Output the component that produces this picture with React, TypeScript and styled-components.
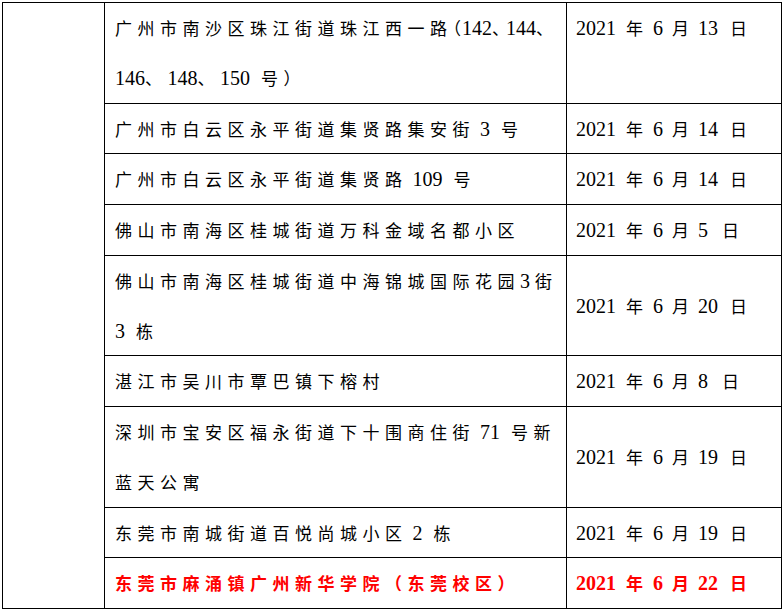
import styled, { createGlobalStyle, css } from "styled-components"

const GlobalStyle = createGlobalStyle`
    html, body {
        margin: 0;
        padding: 0;
        background: #fff;
    }
    body {
        font-family: "Liberation Serif", "Noto Sans CJK SC", serif;
        color: #000;
    }
`

const LINE = 49.75

const Page = styled.div`
    padding: 2px 0 0 2px;
`

const Table = styled.table`
    border-collapse: collapse;
    table-layout: fixed;
    width: 779px;
`

const Col = styled.col<{ $w: number }>`
    width: ${p => p.$w}px;
`

const Cell = styled.td`
    border: 1px solid #000;
    padding: 0;
`

const AddrCell = styled(Cell)<{ $red?: boolean }>`
    padding-left: 10px;
    vertical-align: top;
    color: ${p => (p.$red ? "#ff0000" : "#000")};
    font-weight: ${p => (p.$red ? 700 : 400)};
`

const DateCell = styled(Cell)<{ $top?: boolean; $red?: boolean }>`
    padding-left: 9px;
    vertical-align: ${p => (p.$top ? "top" : "middle")};
    color: ${p => (p.$red ? "#ff0000" : "#000")};
    font-weight: ${p => (p.$red ? 700 : 400)};
`

const Line = styled.div`
    height: ${LINE}px;
    line-height: ${LINE}px;
    white-space: nowrap;
`

const Han = styled.span`
    font-family: "Noto Sans CJK SC", sans-serif;
    font-size: 17px;
    letter-spacing: 5.5px;
`

// punctuation squeezed by justification at a full line end
const Punct = styled(Han)<{ $tight?: boolean; $ls?: number }>`
    ${p =>
        p.$tight &&
        css`
            font-feature-settings: "halt";
            letter-spacing: ${p.$ls ?? 1}px;
        `}
`

const Latin = styled.span<{ $pad?: number }>`
    font-family: "Liberation Serif", serif;
    font-size: 20px;
    margin-right: ${p => p.$pad || 0}px;
`

const DateHan = styled.span<{ $gap: number }>`
    font-family: "Noto Sans CJK SC", sans-serif;
    font-size: 17px;
    margin-left: ${p => p.$gap}px;
`

const DateNum = styled.span<{ $gap?: number }>`
    font-family: "Liberation Serif", serif;
    font-size: 20px;
    margin-left: ${p => p.$gap || 0}px;
`

type Kind = "han" | "punct" | "latin"

const kindOf = (c: string): Kind => {
    if (/[、（）]/.test(c)) return "punct"
    if (/[\u3000-\u303f\u4e00-\u9fff\uff00-\uffef]/.test(c)) return "han"
    return "latin"
}

const AddrLine = ({ text, tight }: { text: string; tight?: boolean }) => {
    const chars = Array.from(text)
    const runs: { kind: Kind; text: string; tight?: boolean }[] = []
    chars.forEach((c, i) => {
        const kind = kindOf(c)
        const squeeze = tight && kind === "punct" && i < chars.length - 1
        const last = runs[runs.length - 1]
        if (last && last.kind === kind && !squeeze && !last.tight) last.text += c
        else runs.push({ kind, text: c, tight: squeeze })
    })
    return (
        <Line>
            {runs.map((r, i) => {
                const next = runs[i + 1]
                if (r.kind === "latin") {
                    const pad = !next ? 0 : r.text.endsWith(" ") ? 6 : next.kind === "han" ? 5 : 0
                    return (
                        <Latin key={i} $pad={pad}>
                            {r.text}
                        </Latin>
                    )
                }
                if (r.kind === "punct")
                    return (
                        <Punct key={i} $tight={r.tight} $ls={r.text === "、" ? 5.5 : 1}>
                            {r.text}
                        </Punct>
                    )
                return <Han key={i}>{r.text}</Han>
            })}
        </Line>
    )
}

const DateText = ({ month, day }: { month: number; day: number }) => (
    <Line>
        <DateNum>2021</DateNum>
        <DateHan $gap={10}>年</DateHan>
        <DateNum $gap={10}>{month}</DateNum>
        <DateHan $gap={9}>月</DateHan>
        <DateNum $gap={9}>{day}</DateNum>
        <DateHan $gap={day < 10 ? 14 : 12}>日</DateHan>
    </Line>
)

const rows = [
    { lines: ["广州市南沙区珠江街道珠江西一路（142、144、", "146、148、150 号）"], tight: true, day: 13, top: true },
    { lines: ["广州市白云区永平街道集贤路集安街 3 号"], day: 14 },
    { lines: ["广州市白云区永平街道集贤路 109 号"], day: 14 },
    { lines: ["佛山市南海区桂城街道万科金域名都小区"], day: 5 },
    { lines: ["佛山市南海区桂城街道中海锦城国际花园3街", "3 栋"], day: 20 },
    { lines: ["湛江市吴川市覃巴镇下榕村"], day: 8 },
    { lines: ["深圳市宝安区福永街道下十围商住街 71 号新", "蓝天公寓"], day: 19 },
    { lines: ["东莞市南城街道百悦尚城小区 2 栋"], day: 19 },
    { lines: ["东莞市麻涌镇广州新华学院（东莞校区）"], day: 22, red: true },
]

const App = () => (
    <>
        <GlobalStyle />
        <Page>
            <Table>
                <colgroup>
                    <Col $w={102} />
                    <Col $w={462} />
                    <Col $w={215} />
                </colgroup>
                <tbody>
                    {rows.map((row, i) => (
                        <tr key={i}>
                            {i === 0 && <Cell rowSpan={rows.length} />}
                            <AddrCell $red={row.red}>
                                {row.lines.map((l, j) => (
                                    <AddrLine key={j} text={l} tight={row.tight && j === 0} />
                                ))}
                            </AddrCell>
                            <DateCell $top={row.top} $red={row.red}>
                                <DateText month={6} day={row.day} />
                            </DateCell>
                        </tr>
                    ))}
                </tbody>
            </Table>
        </Page>
    </>
)

export default App
